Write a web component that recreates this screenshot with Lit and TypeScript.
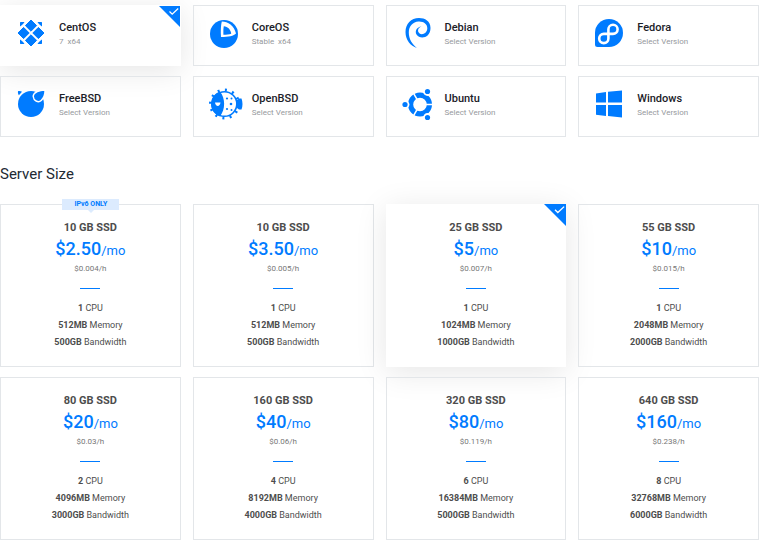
import { LitElement, html, css, svg } from "lit";
import { customElement, state } from "lit/decorators.js";

const icons: Record<string, unknown> = {
  CentOS: svg`
    <path stroke="#007bff" stroke-linejoin="round" d="M17 5l5.600 5.600-5.600 5.600-5.600-5.600z M17 19.800l5.600 5.600L17 31l-5.600-5.600z M9.600 12.400l5.600 5.600-5.600 5.600L4 18z M24.400 12.400L30 18l-5.600 5.600-5.600-5.600z"/>
    <path d="M6.500 7h4L9.300 8.700 7.700 10.300 6 11.500v-4z M27.500 7h-4l1.200 1.700 1.600 1.600 1.700 1.200v-4z M6.500 29h4l-1.200-1.700-1.600-1.600L6 24.500v4z M27.500 29h-4l1.200-1.700 1.600-1.600 1.700-1.200v4z"/>`,
  CoreOS: svg`
    <circle cx="17" cy="19" r="14"/>
    <path fill="#fff" d="M14.800 6.500C21 6.500 27 10.500 29 18.500 27 21 21 22 14 22c-.5-6-.1-12 .8-15.500z"/>
    <path d="M16.800 11.200c4 .3 7 3.500 7.400 7.500-2 .8-4.700 1-7.800 1-.1-3-.1-6 .4-8.500z"/>`,
  Debian: svg`
    <path d="M21.500 11.500C17 11.800 14.500 16 16.500 19.500 20 25 30.500 23 30.500 13 30.500 6 25 3 19 3 11 3 5.500 9 5.500 17c0 8 5 14 11.500 16-5-4-8.200-9-8.200-15.500C8.800 11 13 6.800 18.500 6.500c5-.3 9 2.500 8.800 7-.3 5-5.300 7-8 4.700-2.300-2.200-1.300-5.400 2.200-6.700z"/>`,
  Fedora: svg`
    <path d="M17 4a14 14 0 1 1 0 28H5.500A2.500 2.500 0 0 1 3 29.500V18A14 14 0 0 1 17 4z"/>
    <path fill="none" stroke="#fff" stroke-width="2.600" d="M11.800 18.900H21a4.600 4.600 0 1 0-4.600-4.600V23.500a4.600 4.600 0 1 1-4.600-4.600z"/>`,
  FreeBSD: svg`
    <circle cx="17" cy="18" r="13"/>
    <path stroke="#fff" stroke-width="3" paint-order="stroke" d="M30.300 5c-4 0-10.600 1.800-10.300 5.500.3 3.500 4.200 5.800 6.700 3.500C29 11.500 30.300 8.500 30.300 5z"/>
    <path d="M4 5.200c1.500-.4 3 0 4 .6L4.900 9.300C4 8 3.700 6.500 4 5.200z"/>`,
  OpenBSD: svg`
    <g fill="none" stroke="#007bff"><circle cx="17.500" cy="18" r="14" stroke-width="3" stroke-dasharray="2 5.330"/><circle cx="17.500" cy="18" r="12.300" stroke-width="1.600"/></g>
    <path d="M13 5.800c5.500 6 5.500 18 0 24.400C1 27 1 9 13 5.800z M30 14l2-1.500h2.500q2 5.500 0 11H32L30 22z"/>
    <circle cx="20" cy="12.500" r="1.100"/><circle cx="24.500" cy="12.500" r="1"/><circle cx="24" cy="18" r="1.300"/><circle cx="20" cy="23" r="1.100"/><circle cx="24.500" cy="24" r="1"/>
    <path fill="#fff" d="M8 16.500h5.500c-.5 4.500-5 4.500-5.500 0z"/>`,
  Ubuntu: svg`
    <circle cx="20" cy="18.500" r="9.400" fill="none" stroke="#007bff" stroke-width="5.200"/>
    <path fill="none" stroke="#fff" stroke-width="1.500" d="M20 18.500H34 M20 18.500L13 6.400 M20 18.500L13 30.600"/>
    <circle cx="5" cy="18.500" r="4.400" fill="#fff"/><circle cx="27.500" cy="5.500" r="4.400" fill="#fff"/><circle cx="27.500" cy="31.500" r="4.400" fill="#fff"/>
    <circle cx="5" cy="18.500" r="2.600"/><circle cx="27.500" cy="5.500" r="2.600"/><circle cx="27.500" cy="31.500" r="2.600"/>`,
  Windows: svg`
    <path d="M4 7.500l10-1.400v10.500H4z M16 5.800L30 4.500v12.100H16z M4 18.900h10v11L4 28.700z M16 18.900h14V31.500l-14-1.400z"/>`,
};

const systems = [
  ["CentOS", "7  x64"],
  ["CoreOS", "Stable  x64"],
  ["Debian", "Select Version"],
  ["Fedora", "Select Version"],
  ["FreeBSD", "Select Version"],
  ["OpenBSD", "Select Version"],
  ["Ubuntu", "Select Version"],
  ["Windows", "Select Version"],
];

const plans = [
  { size: "10 GB", price: "$2.50", hour: "$0.004", cpu: "1", ram: "512MB", net: "500GB", tag: "IPv6 ONLY" },
  { size: "10 GB", price: "$3.50", hour: "$0.005", cpu: "1", ram: "512MB", net: "500GB" },
  { size: "25 GB", price: "$5", hour: "$0.007", cpu: "1", ram: "1024MB", net: "1000GB" },
  { size: "55 GB", price: "$10", hour: "$0.015", cpu: "1", ram: "2048MB", net: "2000GB" },
  { size: "80 GB", price: "$20", hour: "$0.03", cpu: "2", ram: "4096MB", net: "3000GB" },
  { size: "160 GB", price: "$40", hour: "$0.06", cpu: "4", ram: "8192MB", net: "4000GB" },
  { size: "320 GB", price: "$80", hour: "$0.119", cpu: "6", ram: "16384MB", net: "5000GB" },
  { size: "640 GB", price: "$160", hour: "$0.238", cpu: "8", ram: "32768MB", net: "6000GB" },
];

@customElement("app-root")
export class AppRoot extends LitElement {
  @state() private os = 0;
  @state() private plan = 2;

  static styles = css`
    :host {
      display: block;
      padding: 5px 2px 0 0;
      background: #fff;
      color: #4d4d4d;
      font-family: Roboto, "Liberation Sans", sans-serif;
      overflow: hidden;
    }
    * { box-sizing: border-box; }
    fieldset { border: 0; margin: 0; padding: 0; min-width: 0; }
    .grid {
      display: grid;
      grid-template-columns: repeat(4, minmax(0, 1fr));
      gap: 10px 12px;
    }
    .card {
      position: relative;
      display: block;
      border: 1px solid #e3e6e9;
      cursor: pointer;
    }
    .card.on {
      border-color: #fff;
      background: #fff;
      box-shadow: 0 5px 30px rgba(0, 0, 0, 0.1);
    }
    .card:has(input:focus-visible) { outline: 2px solid #007bff; }
    input {
      position: absolute;
      inset: 0;
      margin: 0;
      opacity: 0;
      cursor: pointer;
    }
    .corner {
      position: absolute;
      top: 0;
      right: 0;
      width: 21px;
      height: 21px;
    }
    .plan .corner { top: -1px; right: -1px; width: 22px; height: 22px; }
    .os {
      display: flex;
      gap: 9px;
      padding: 9px 13px 14px;
    }
    .icon { width: 36px; height: 36px; flex: none; fill: #007bff; }
    .os-text { display: flex; flex-direction: column; padding-top: 6px; }
    .name { font-size: 11px; line-height: 14px; font-weight: 500; color: #1b2128; }
    .version { font-size: 8px; line-height: 14px; color: #96999d; white-space: pre; }
    h2 {
      margin: 27px 0 20px;
      font-size: 15px;
      line-height: 20px;
      font-weight: 400;
      color: #222a33;
    }
    .plan {
      display: flex;
      flex-direction: column;
      align-items: center;
      padding: 16px 8px 15px;
      font-size: 9px;
      line-height: 17px;
    }
    .size { font-size: 11px; line-height: 14px; font-weight: 700; }
    .price { margin-top: 3px; font-size: 13px; line-height: 26px; color: #007bff; }
    .amount { font-size: 18px; line-height: 20px; font-weight: 500; }
    .hour { font-size: 8px; line-height: 10px; color: #777; }
    .rule { width: 20px; height: 1px; margin: 14px 0 11px; background: #007bff; }
    .tag {
      position: absolute;
      top: -6px;
      left: 50%;
      width: 57px;
      margin-left: -28px;
      background: #dcebfe;
      color: #007bff;
      font-size: 7px;
      line-height: 11px;
      font-weight: 700;
      text-align: center;
    }
    .tag::after {
      content: "";
      position: absolute;
      top: 100%;
      left: 50%;
      margin-left: -3px;
      border: 3px solid transparent;
      border-bottom: 0;
      border-top-color: #dcebfe;
    }
  `;

  private corner() {
    return html`<svg class="corner" viewBox="0 0 21 21" aria-hidden="true">
      <path d="M0 0h21v21z" fill="#007bff" />
      <path d="M10.500 5.500l2.700 2.700 6-5.700" fill="none" stroke="#fff" stroke-width="1.300" />
    </svg>`;
  }

  render() {
    return html`
      <fieldset class="grid" aria-label="Server Type">
        ${systems.map(([name, version], i) => html`
          <label class="card os ${i === this.os ? "on" : ""}">
            <input type="radio" name="os" .checked=${i === this.os} @change=${() => (this.os = i)} />
            <svg class="icon" viewBox="0 0 36 36" aria-hidden="true">${icons[name]}</svg>
            <span class="os-text"><span class="name">${name}</span><span class="version">${version}</span></span>
            ${i === this.os ? this.corner() : null}
          </label>`)}
      </fieldset>
      <h2 id="size">Server Size</h2>
      <fieldset class="grid" aria-labelledby="size">
        ${plans.map((p, i) => html`
          <label class="card plan ${i === this.plan ? "on" : ""}">
            <input type="radio" name="plan" .checked=${i === this.plan} @change=${() => (this.plan = i)} />
            ${p.tag ? html`<span class="tag">${p.tag}</span>` : null}
            <span class="size">${p.size} SSD</span>
            <span class="price"><span class="amount">${p.price}</span>/mo</span>
            <span class="hour">${p.hour}/h</span>
            <span class="rule"></span>
            <span><b>${p.cpu}</b> CPU</span>
            <span><b>${p.ram}</b> Memory</span>
            <span><b>${p.net}</b> Bandwidth</span>
            ${i === this.plan ? this.corner() : null}
          </label>`)}
      </fieldset>
    `;
  }
}
